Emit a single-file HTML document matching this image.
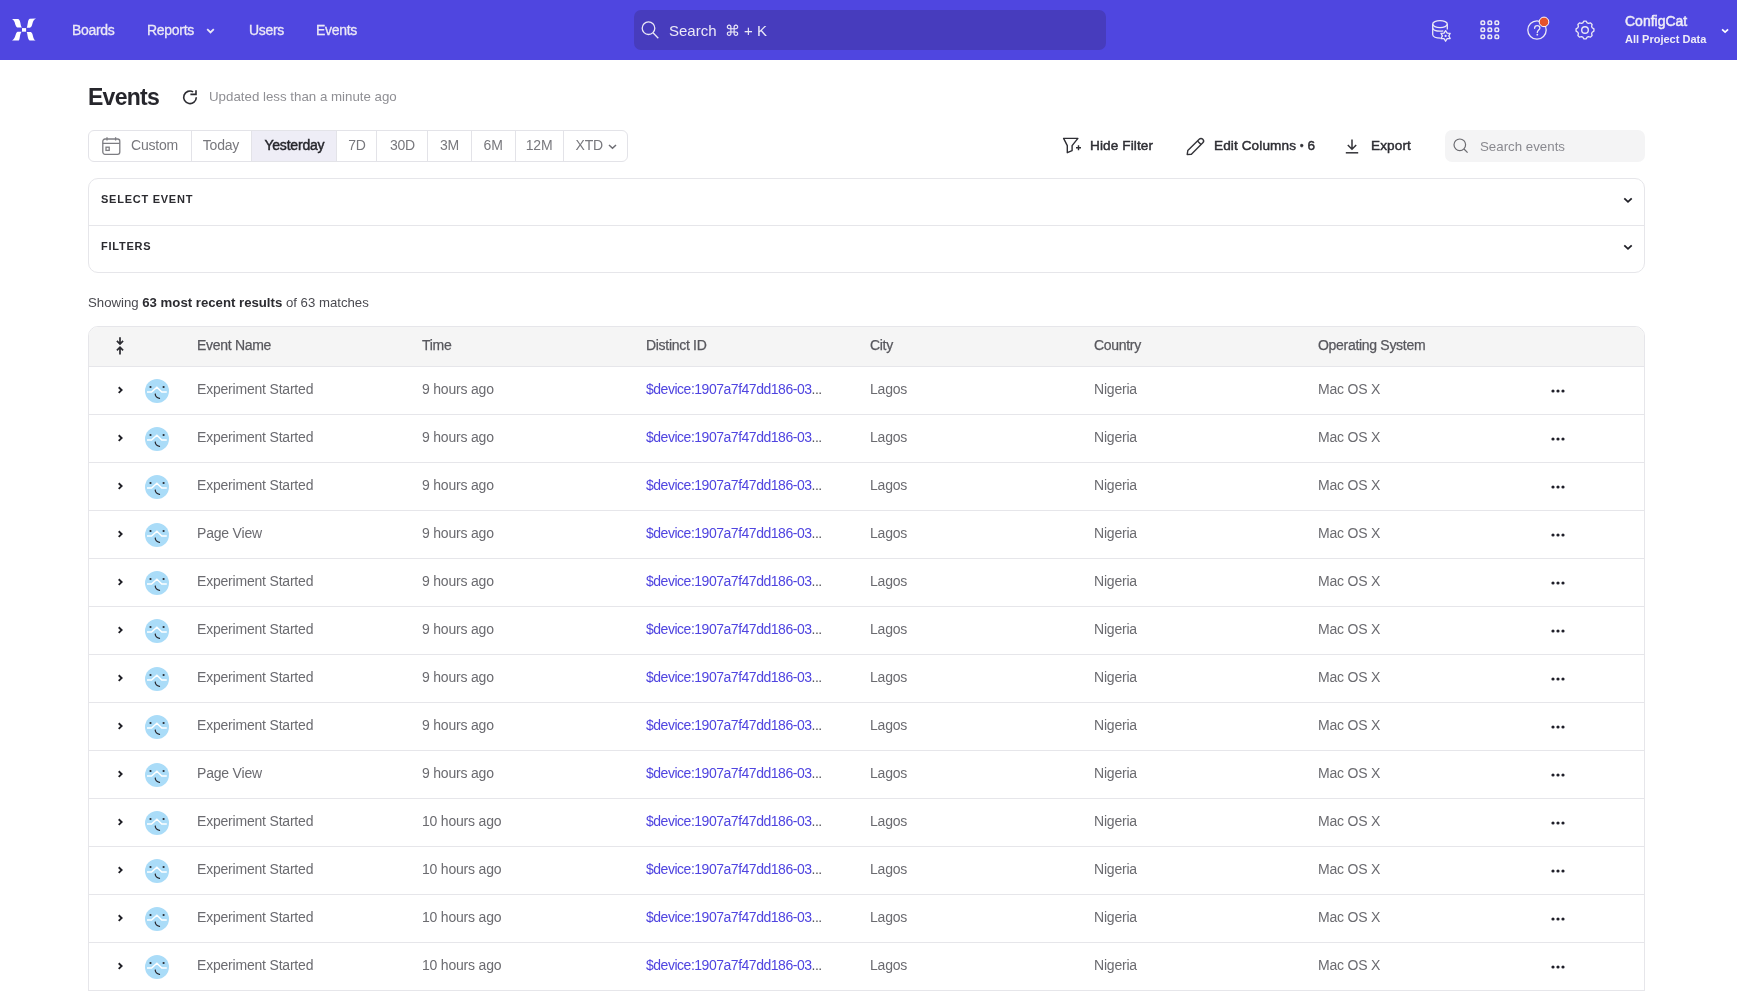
<!DOCTYPE html><html><head><meta charset="utf-8"><style>
*{box-sizing:border-box;margin:0;padding:0}
html,body{width:1737px;height:991px;overflow:hidden;background:#fff;font-family:"Liberation Sans",sans-serif;position:relative}
#root{position:absolute;left:0;top:0;width:1737px;height:991px;will-change:transform;background:#fff}
.abs{position:absolute;white-space:nowrap}
svg{position:absolute;overflow:visible}
#hdr{position:absolute;left:0;top:0;width:1737px;height:60px;background:#4f46e0}
.nav{position:absolute;top:0px;height:60px;line-height:60px;color:#ebe8f6;font-size:14px;letter-spacing:-0.3px;-webkit-text-stroke:0.3px #ebe8f6;white-space:nowrap}
#search{position:absolute;left:634px;top:10px;width:472px;height:40px;background:#473cbd;border-radius:7px}
#search .t{position:absolute;left:35px;top:1px;line-height:40px;font-size:15px;color:#ece9f7;white-space:nowrap}
#title{left:88px;top:83.5px;font-size:23px;font-weight:700;color:#26262c;letter-spacing:-0.75px}
#upd{left:209px;top:88.5px;font-size:13.3px;color:#8f8f94}
#seg{position:absolute;left:88px;top:130px;width:540px;height:32px;border:1px solid #e3e3e8;border-radius:6px;overflow:hidden}
.sg{position:absolute;top:0;height:30px;line-height:28px;font-size:14px;letter-spacing:-0.2px;color:#78787d;border-right:1px solid #e3e3e8;white-space:nowrap}
.tb{position:absolute;top:130px;height:32px;line-height:32px;font-size:13.6px;letter-spacing:0.1px;font-weight:400;color:#2e2e34;-webkit-text-stroke:0.45px #2e2e34;white-space:nowrap}
#sev{position:absolute;left:1445px;top:130px;width:200px;height:32px;background:#f4f4f5;border-radius:7px}
#sev .t{position:absolute;left:35px;top:1px;line-height:32px;font-size:13.3px;color:#8a8a90;white-space:nowrap}
#acc{position:absolute;left:88px;top:178px;width:1557px;height:95px;border:1px solid #e6e6ea;border-radius:10px}
.acch{position:absolute;left:12px;font-size:11px;font-weight:700;letter-spacing:0.75px;color:#2b2b30}
#showing{left:88px;top:294.5px;font-size:13.2px;color:#4a4a50}
#showing b{color:#2b2b30}
#tbl{position:absolute;left:88px;top:326px;width:1557px;height:700px;border:1px solid #e6e6ea;border-radius:10px;overflow:hidden}
#th{position:absolute;left:0;top:0;width:100%;height:40px;background:#f5f5f5;border-bottom:1px solid #e6e6ea}
.hc{position:absolute;top:-1px;line-height:39px;font-size:14px;letter-spacing:-0.3px;color:#58585e;-webkit-text-stroke:0.25px #58585e;white-space:nowrap}
.row{position:absolute;left:0;width:100%;height:48px;border-bottom:1px solid #e6e6ea}
.c{position:absolute;top:-1px;line-height:47px;font-size:14px;letter-spacing:-0.2px;color:#6b6b70;white-space:nowrap}
.c.l{color:#55555b}
</style></head><body><div id="root">
<div id="hdr">
<svg style="left:10px;top:16px" width="28" height="28" viewBox="0 0 28 28"><g fill="#fff"><path d="M2 3.1 L8.2 3.1 C9.3 3.6 9.9 4.6 10.3 6.5 C10.8 9 11.1 10.9 11.9 11.6 L7.3 11.6 C6.3 10.9 5.7 9.9 5.2 8.3 C4.6 6 4.1 4.4 2 3.1 Z"/><path d="M26 2.4 L19.8 2.8 C18.7 3.4 18.3 4.5 17.9 6.5 C17.4 9 17.2 10.9 16.7 11.7 L19.8 11.7 C21.2 11.4 21.9 10 22.4 7.8 C22.9 5.4 23.6 3.6 26 2.4 Z"/><path d="M7.6 15.8 L11.6 15.8 C10.6 17 10.2 19 9.8 21.2 C9.5 23 9.2 24 8.8 24.6 L2 24.6 C4 23.5 4.8 21.5 5.4 19.6 C6 17.6 6.6 16.3 7.6 15.8 Z"/><path d="M16.7 16.1 L20.9 16.1 C22 16.8 22.6 18.2 23 20.2 C23.5 22.6 24.2 24 25.7 24.6 L19.8 24.6 C18.6 24 18.1 22.6 17.7 20.6 C17.3 18.5 17.2 16.9 16.7 16.1 Z"/><rect x="12" y="12.1" width="4.1" height="3.6"/></g></svg>
<div class="nav" style="left:72px">Boards</div>
<div class="nav" style="left:147px">Reports</div>
<div class="nav" style="left:249px">Users</div>
<div class="nav" style="left:316px">Events</div>
<svg style="left:206px;top:28px" width="9" height="6" viewBox="0 0 9 6"><path d="M1.2 1.2 L4.5 4.4 L7.8 1.2" fill="none" stroke="#ebe8f6" stroke-width="1.8"/></svg>
<div id="search">
<svg style="left:7px;top:11px" width="19" height="19" viewBox="0 0 19 19"><circle cx="7.5" cy="7.2" r="6.3" fill="none" stroke="#ebe8f6" stroke-width="1.3"/><path d="M12 11.8 L17.3 17.2" stroke="#ebe8f6" stroke-width="1.3"/></svg>
<div class="t">Search&nbsp; ⌘ + K</div></div>
<svg style="left:1432px;top:20px" width="20" height="22" viewBox="0 0 20 22"><g fill="none" stroke="#ebe8f6" stroke-width="1.3"><ellipse cx="8" cy="4.1" rx="7.3" ry="3.5"/><path d="M0.7 4.1 V14.5 C0.7 16.6 4 18.2 8.5 18.2"/><path d="M15.3 4.1 V9.5"/><path d="M0.7 7.8 C0.7 10 4 11.2 8 11.2 C9.5 11.2 10.5 11.1 11.3 10.9"/></g><g transform="translate(13.6,15.9)"><path d="M0 -5.3 L1.6 -2.8 L4.6 -2.6 L3.2 0 L4.6 2.6 L1.6 2.8 L0 5.3 L-1.6 2.8 L-4.6 2.6 L-3.2 0 L-4.6 -2.6 L-1.6 -2.8 Z" fill="#4f46e0" stroke="#ebe8f6" stroke-width="1.3" stroke-linejoin="round"/><circle r="1.1" fill="#ebe8f6"/></g></svg>
<svg style="left:1479.5px;top:20px" width="20" height="20" viewBox="0 0 20 20"><rect x="1" y="1" width="3.6" height="3.6" rx="1.2" fill="none" stroke="#ebe8f6" stroke-width="1.5"/><rect x="1" y="8" width="3.6" height="3.6" rx="1.2" fill="none" stroke="#ebe8f6" stroke-width="1.5"/><rect x="1" y="15" width="3.6" height="3.6" rx="1.2" fill="none" stroke="#ebe8f6" stroke-width="1.5"/><rect x="8" y="1" width="3.6" height="3.6" rx="1.2" fill="none" stroke="#ebe8f6" stroke-width="1.5"/><rect x="8" y="8" width="3.6" height="3.6" rx="1.2" fill="none" stroke="#ebe8f6" stroke-width="1.5"/><rect x="8" y="15" width="3.6" height="3.6" rx="1.2" fill="none" stroke="#ebe8f6" stroke-width="1.5"/><rect x="15" y="1" width="3.6" height="3.6" rx="1.2" fill="none" stroke="#ebe8f6" stroke-width="1.5"/><rect x="15" y="8" width="3.6" height="3.6" rx="1.2" fill="none" stroke="#ebe8f6" stroke-width="1.5"/><rect x="15" y="15" width="3.6" height="3.6" rx="1.2" fill="none" stroke="#ebe8f6" stroke-width="1.5"/></svg>
<svg style="left:1527px;top:16px" width="24" height="25" viewBox="0 0 24 25"><circle cx="10" cy="14" r="9.2" fill="none" stroke="#ebe8f6" stroke-width="1.3"/><path d="M7.6 12.3 C7.6 10.5 8.8 9.6 10.3 9.6 C11.8 9.6 12.9 10.6 12.9 11.9 C12.9 13.9 10.3 14.2 10.3 16.4" fill="none" stroke="#ebe8f6" stroke-width="1.3" stroke-linecap="round"/><circle cx="10.3" cy="18.7" r="0.9" fill="#ebe8f6"/><circle cx="17" cy="5.9" r="4.8" fill="#e5522d" stroke="#fff" stroke-width="1"/></svg>
<svg style="left:1575px;top:20px" width="20" height="20" viewBox="0 0 20 20"><polygon points="7.81,2.83 8.90,1.07 11.10,1.07 12.19,2.83 13.52,3.38 15.54,2.91 17.09,4.46 16.62,6.48 17.17,7.81 18.93,8.90 18.93,11.10 17.17,12.19 16.62,13.52 17.09,15.54 15.54,17.09 13.52,16.62 12.19,17.17 11.10,18.93 8.90,18.93 7.81,17.17 6.48,16.62 4.46,17.09 2.91,15.54 3.38,13.52 2.83,12.19 1.07,11.10 1.07,8.90 2.83,7.81 3.38,6.48 2.91,4.46 4.46,2.91 6.48,3.38" fill="none" stroke="#ebe8f6" stroke-width="1.3" stroke-linejoin="round"/><circle cx="10" cy="10" r="3.3" fill="none" stroke="#ebe8f6" stroke-width="1.4"/></svg>
<div class="abs" style="left:1625px;top:12.5px;font-size:14px;color:#eeecf8;-webkit-text-stroke:0.5px #eeecf8">ConfigCat</div>
<div class="abs" style="left:1625px;top:33px;font-size:11px;font-weight:700;color:#eeecf8">All Project Data</div>
<svg style="left:1721px;top:28px" width="9" height="6" viewBox="0 0 9 6"><path d="M1.1 1.3 L4.1 4.1 L7.1 1.3" fill="none" stroke="#fff" stroke-width="1.7"/></svg>
</div>
<div id="title" class="abs">Events</div>
<svg style="left:182px;top:89px" width="16" height="16" viewBox="0 0 16 16"><path d="M14.3 8.3 A6.3 6.3 0 1 1 11.15 2.84" fill="none" stroke="#2c2c32" stroke-width="1.6"/><path d="M8.4 5.4 H14 V1.2" fill="none" stroke="#2c2c32" stroke-width="1.6"/></svg>
<div id="upd" class="abs">Updated less than a minute ago</div>
<div id="seg">
<div class="sg" style="left:0;width:102.6px;"><span style="position:absolute;left:42px">Custom</span></div>
<div class="sg" style="left:101.6px;width:61.8px;text-align:center;">Today</div>
<div class="sg" style="left:163.4px;width:85.0px;text-align:center;background:#eeedf6;color:#26262c;-webkit-text-stroke:0.45px #26262c;letter-spacing:-0.2px;line-height:29px;">Yesterday</div>
<div class="sg" style="left:248.4px;width:40.1px;text-align:center;">7D</div>
<div class="sg" style="left:288.5px;width:50.9px;text-align:center;">30D</div>
<div class="sg" style="left:339.4px;width:43.2px;text-align:center;">3M</div>
<div class="sg" style="left:382.6px;width:44.0px;text-align:center;">6M</div>
<div class="sg" style="left:426.6px;width:48.0px;text-align:center;">12M</div>
<div class="sg" style="left:474.6px;width:63.9px;border-right:none;"><span style="position:absolute;left:12px">XTD</span></div>
</div>
<svg style="left:102px;top:137px" width="19" height="18" viewBox="0 0 19 18"><g fill="none" stroke="#7d7d82" stroke-width="1.3"><rect x="0.8" y="2" width="17" height="15.3" rx="2.2"/><path d="M0.8 6.3 H17.8 M5 0.3 V3.5 M13.6 0.3 V3.5"/><rect x="4" y="10.2" width="3.2" height="3.2"/></g></svg>
<svg style="left:608px;top:144px" width="9" height="6" viewBox="0 0 9 6"><path d="M1 1 L4.5 4.3 L8 1" fill="none" stroke="#6e6e74" stroke-width="1.5"/></svg>
<svg style="left:1063px;top:137px" width="20" height="18" viewBox="0 0 20 18"><g fill="none" stroke="#2e2e34" stroke-width="1.4" stroke-linejoin="round"><path d="M0.6 1.4 H14.9 L9.1 8.6 V13.6 L4.3 15.7 V8.6 Z"/><path d="M15.5 8.3 V13.3 M13 10.8 H18"/></g></svg>
<div class="tb" style="left:1090px">Hide Filter</div>
<svg style="left:1186px;top:137px" width="19" height="19" viewBox="0 0 19 19"><g fill="none" stroke="#333338" stroke-width="1.4" stroke-linejoin="round"><path d="M1.2 17.5 L1.8 13.6 L13.2 2.2 C14.2 1.2 15.8 1.2 16.8 2.2 C17.8 3.2 17.8 4.8 16.8 5.8 L5.4 17.2 Z"/><path d="M11.5 4 L15 7.5"/></g></svg>
<div class="tb" style="left:1214px">Edit Columns <span style="font-size:10px;position:relative;top:-1px">•</span> 6</div>
<svg style="left:1345px;top:139px" width="14" height="15" viewBox="0 0 14 15"><g fill="none" stroke="#333338" stroke-width="1.5"><path d="M7 0.5 V10 M2.8 6 L7 10.2 L11.2 6"/><path d="M0.8 13.8 H13.2"/></g></svg>
<div class="tb" style="left:1371px">Export</div>
<div id="sev">
<svg style="left:8px;top:8px" width="16" height="16" viewBox="0 0 16 16"><circle cx="6.8" cy="6.8" r="5.8" fill="none" stroke="#6b6b70" stroke-width="1.2"/><path d="M11 11 L14.6 14.6" stroke="#6b6b70" stroke-width="1.2"/></svg>
<div class="t">Search events</div></div>
<div id="acc"><div style="position:absolute;left:0;top:46px;width:100%;height:1px;background:#e6e6ea"></div>
<div class="acch abs" style="top:14px">SELECT EVENT</div><div class="acch abs" style="top:61px">FILTERS</div>
<svg style="left:1534px;top:18px" width="10" height="7" viewBox="0 0 10 7"><path d="M1.3 1.3 L5 4.8 L8.7 1.3" fill="none" stroke="#1f1f26" stroke-width="1.8"/></svg>
<svg style="left:1534px;top:65px" width="10" height="7" viewBox="0 0 10 7"><path d="M1.3 1.3 L5 4.8 L8.7 1.3" fill="none" stroke="#1f1f26" stroke-width="1.8"/></svg>
</div>
<div id="showing" class="abs">Showing <b>63 most recent results</b> of 63 matches</div>
<div id="tbl"><div id="th">
<svg style="left:27px;top:9px" width="10" height="20" viewBox="0 0 10 20"><g fill="none" stroke="#2a2a30" stroke-width="1.7"><path d="M4 1.3 V8.2 M0.9 4.9 L4 8 L7.1 4.9"/><path d="M4 18.6 V11.2 M0.9 14.3 L4 11.2 L7.1 14.3"/></g></svg>
<div class="hc" style="left:108px">Event Name</div>
<div class="hc" style="left:333px">Time</div>
<div class="hc" style="left:557px">Distinct ID</div>
<div class="hc" style="left:781px">City</div>
<div class="hc" style="left:1005px">Country</div>
<div class="hc" style="left:1229px">Operating System</div>
</div>
<div class="row" style="top:40px">
<svg style="left:28px;top:19px" width="7" height="9" viewBox="0 0 7 9"><path d="M1.7 1.3 L4.6 4.1 L1.7 6.9" fill="none" stroke="#1f1f26" stroke-width="1.9"/></svg>
<svg style="left:56px;top:12px" width="24" height="24" viewBox="0 0 24 24"><circle cx="12" cy="12" r="12" fill="#aadcf8"/><path d="M2 13 H6.6 L11.9 8.3 L16.8 13 H21.8" fill="none" stroke="#fff" stroke-width="1.5"/><circle cx="5.5" cy="8" r="1.1" fill="#2a2a30"/><circle cx="18.6" cy="8" r="1.1" fill="#2a2a30"/><path d="M10.2 15 C10.4 17.3 11.9 18.9 14.5 19.4" fill="none" stroke="#2a2a30" stroke-width="1.25" stroke-linecap="round"/></svg>
<div class="c" style="left:108px">Experiment Started</div>
<div class="c" style="left:333px">9 hours ago</div>
<div class="c l" style="left:557px"><span style="color:#4f44e0;letter-spacing:-0.48px">$device:1907a7f47dd186-03</span><span style="letter-spacing:-0.5px">...</span></div>
<div class="c" style="left:781px">Lagos</div>
<div class="c" style="left:1005px">Nigeria</div>
<div class="c" style="left:1229px">Mac OS X</div>
<svg style="left:1461.5px;top:22px" width="16" height="4" viewBox="0 0 16 4"><circle cx="2" cy="2" r="1.6" fill="#1f1f29"/><circle cx="7" cy="2" r="1.6" fill="#1f1f29"/><circle cx="12" cy="2" r="1.6" fill="#1f1f29"/></svg>
</div>
<div class="row" style="top:88px">
<svg style="left:28px;top:19px" width="7" height="9" viewBox="0 0 7 9"><path d="M1.7 1.3 L4.6 4.1 L1.7 6.9" fill="none" stroke="#1f1f26" stroke-width="1.9"/></svg>
<svg style="left:56px;top:12px" width="24" height="24" viewBox="0 0 24 24"><circle cx="12" cy="12" r="12" fill="#aadcf8"/><path d="M2 13 H6.6 L11.9 8.3 L16.8 13 H21.8" fill="none" stroke="#fff" stroke-width="1.5"/><circle cx="5.5" cy="8" r="1.1" fill="#2a2a30"/><circle cx="18.6" cy="8" r="1.1" fill="#2a2a30"/><path d="M10.2 15 C10.4 17.3 11.9 18.9 14.5 19.4" fill="none" stroke="#2a2a30" stroke-width="1.25" stroke-linecap="round"/></svg>
<div class="c" style="left:108px">Experiment Started</div>
<div class="c" style="left:333px">9 hours ago</div>
<div class="c l" style="left:557px"><span style="color:#4f44e0;letter-spacing:-0.48px">$device:1907a7f47dd186-03</span><span style="letter-spacing:-0.5px">...</span></div>
<div class="c" style="left:781px">Lagos</div>
<div class="c" style="left:1005px">Nigeria</div>
<div class="c" style="left:1229px">Mac OS X</div>
<svg style="left:1461.5px;top:22px" width="16" height="4" viewBox="0 0 16 4"><circle cx="2" cy="2" r="1.6" fill="#1f1f29"/><circle cx="7" cy="2" r="1.6" fill="#1f1f29"/><circle cx="12" cy="2" r="1.6" fill="#1f1f29"/></svg>
</div>
<div class="row" style="top:136px">
<svg style="left:28px;top:19px" width="7" height="9" viewBox="0 0 7 9"><path d="M1.7 1.3 L4.6 4.1 L1.7 6.9" fill="none" stroke="#1f1f26" stroke-width="1.9"/></svg>
<svg style="left:56px;top:12px" width="24" height="24" viewBox="0 0 24 24"><circle cx="12" cy="12" r="12" fill="#aadcf8"/><path d="M2 13 H6.6 L11.9 8.3 L16.8 13 H21.8" fill="none" stroke="#fff" stroke-width="1.5"/><circle cx="5.5" cy="8" r="1.1" fill="#2a2a30"/><circle cx="18.6" cy="8" r="1.1" fill="#2a2a30"/><path d="M10.2 15 C10.4 17.3 11.9 18.9 14.5 19.4" fill="none" stroke="#2a2a30" stroke-width="1.25" stroke-linecap="round"/></svg>
<div class="c" style="left:108px">Experiment Started</div>
<div class="c" style="left:333px">9 hours ago</div>
<div class="c l" style="left:557px"><span style="color:#4f44e0;letter-spacing:-0.48px">$device:1907a7f47dd186-03</span><span style="letter-spacing:-0.5px">...</span></div>
<div class="c" style="left:781px">Lagos</div>
<div class="c" style="left:1005px">Nigeria</div>
<div class="c" style="left:1229px">Mac OS X</div>
<svg style="left:1461.5px;top:22px" width="16" height="4" viewBox="0 0 16 4"><circle cx="2" cy="2" r="1.6" fill="#1f1f29"/><circle cx="7" cy="2" r="1.6" fill="#1f1f29"/><circle cx="12" cy="2" r="1.6" fill="#1f1f29"/></svg>
</div>
<div class="row" style="top:184px">
<svg style="left:28px;top:19px" width="7" height="9" viewBox="0 0 7 9"><path d="M1.7 1.3 L4.6 4.1 L1.7 6.9" fill="none" stroke="#1f1f26" stroke-width="1.9"/></svg>
<svg style="left:56px;top:12px" width="24" height="24" viewBox="0 0 24 24"><circle cx="12" cy="12" r="12" fill="#aadcf8"/><path d="M2 13 H6.6 L11.9 8.3 L16.8 13 H21.8" fill="none" stroke="#fff" stroke-width="1.5"/><circle cx="5.5" cy="8" r="1.1" fill="#2a2a30"/><circle cx="18.6" cy="8" r="1.1" fill="#2a2a30"/><path d="M10.2 15 C10.4 17.3 11.9 18.9 14.5 19.4" fill="none" stroke="#2a2a30" stroke-width="1.25" stroke-linecap="round"/></svg>
<div class="c" style="left:108px">Page View</div>
<div class="c" style="left:333px">9 hours ago</div>
<div class="c l" style="left:557px"><span style="color:#4f44e0;letter-spacing:-0.48px">$device:1907a7f47dd186-03</span><span style="letter-spacing:-0.5px">...</span></div>
<div class="c" style="left:781px">Lagos</div>
<div class="c" style="left:1005px">Nigeria</div>
<div class="c" style="left:1229px">Mac OS X</div>
<svg style="left:1461.5px;top:22px" width="16" height="4" viewBox="0 0 16 4"><circle cx="2" cy="2" r="1.6" fill="#1f1f29"/><circle cx="7" cy="2" r="1.6" fill="#1f1f29"/><circle cx="12" cy="2" r="1.6" fill="#1f1f29"/></svg>
</div>
<div class="row" style="top:232px">
<svg style="left:28px;top:19px" width="7" height="9" viewBox="0 0 7 9"><path d="M1.7 1.3 L4.6 4.1 L1.7 6.9" fill="none" stroke="#1f1f26" stroke-width="1.9"/></svg>
<svg style="left:56px;top:12px" width="24" height="24" viewBox="0 0 24 24"><circle cx="12" cy="12" r="12" fill="#aadcf8"/><path d="M2 13 H6.6 L11.9 8.3 L16.8 13 H21.8" fill="none" stroke="#fff" stroke-width="1.5"/><circle cx="5.5" cy="8" r="1.1" fill="#2a2a30"/><circle cx="18.6" cy="8" r="1.1" fill="#2a2a30"/><path d="M10.2 15 C10.4 17.3 11.9 18.9 14.5 19.4" fill="none" stroke="#2a2a30" stroke-width="1.25" stroke-linecap="round"/></svg>
<div class="c" style="left:108px">Experiment Started</div>
<div class="c" style="left:333px">9 hours ago</div>
<div class="c l" style="left:557px"><span style="color:#4f44e0;letter-spacing:-0.48px">$device:1907a7f47dd186-03</span><span style="letter-spacing:-0.5px">...</span></div>
<div class="c" style="left:781px">Lagos</div>
<div class="c" style="left:1005px">Nigeria</div>
<div class="c" style="left:1229px">Mac OS X</div>
<svg style="left:1461.5px;top:22px" width="16" height="4" viewBox="0 0 16 4"><circle cx="2" cy="2" r="1.6" fill="#1f1f29"/><circle cx="7" cy="2" r="1.6" fill="#1f1f29"/><circle cx="12" cy="2" r="1.6" fill="#1f1f29"/></svg>
</div>
<div class="row" style="top:280px">
<svg style="left:28px;top:19px" width="7" height="9" viewBox="0 0 7 9"><path d="M1.7 1.3 L4.6 4.1 L1.7 6.9" fill="none" stroke="#1f1f26" stroke-width="1.9"/></svg>
<svg style="left:56px;top:12px" width="24" height="24" viewBox="0 0 24 24"><circle cx="12" cy="12" r="12" fill="#aadcf8"/><path d="M2 13 H6.6 L11.9 8.3 L16.8 13 H21.8" fill="none" stroke="#fff" stroke-width="1.5"/><circle cx="5.5" cy="8" r="1.1" fill="#2a2a30"/><circle cx="18.6" cy="8" r="1.1" fill="#2a2a30"/><path d="M10.2 15 C10.4 17.3 11.9 18.9 14.5 19.4" fill="none" stroke="#2a2a30" stroke-width="1.25" stroke-linecap="round"/></svg>
<div class="c" style="left:108px">Experiment Started</div>
<div class="c" style="left:333px">9 hours ago</div>
<div class="c l" style="left:557px"><span style="color:#4f44e0;letter-spacing:-0.48px">$device:1907a7f47dd186-03</span><span style="letter-spacing:-0.5px">...</span></div>
<div class="c" style="left:781px">Lagos</div>
<div class="c" style="left:1005px">Nigeria</div>
<div class="c" style="left:1229px">Mac OS X</div>
<svg style="left:1461.5px;top:22px" width="16" height="4" viewBox="0 0 16 4"><circle cx="2" cy="2" r="1.6" fill="#1f1f29"/><circle cx="7" cy="2" r="1.6" fill="#1f1f29"/><circle cx="12" cy="2" r="1.6" fill="#1f1f29"/></svg>
</div>
<div class="row" style="top:328px">
<svg style="left:28px;top:19px" width="7" height="9" viewBox="0 0 7 9"><path d="M1.7 1.3 L4.6 4.1 L1.7 6.9" fill="none" stroke="#1f1f26" stroke-width="1.9"/></svg>
<svg style="left:56px;top:12px" width="24" height="24" viewBox="0 0 24 24"><circle cx="12" cy="12" r="12" fill="#aadcf8"/><path d="M2 13 H6.6 L11.9 8.3 L16.8 13 H21.8" fill="none" stroke="#fff" stroke-width="1.5"/><circle cx="5.5" cy="8" r="1.1" fill="#2a2a30"/><circle cx="18.6" cy="8" r="1.1" fill="#2a2a30"/><path d="M10.2 15 C10.4 17.3 11.9 18.9 14.5 19.4" fill="none" stroke="#2a2a30" stroke-width="1.25" stroke-linecap="round"/></svg>
<div class="c" style="left:108px">Experiment Started</div>
<div class="c" style="left:333px">9 hours ago</div>
<div class="c l" style="left:557px"><span style="color:#4f44e0;letter-spacing:-0.48px">$device:1907a7f47dd186-03</span><span style="letter-spacing:-0.5px">...</span></div>
<div class="c" style="left:781px">Lagos</div>
<div class="c" style="left:1005px">Nigeria</div>
<div class="c" style="left:1229px">Mac OS X</div>
<svg style="left:1461.5px;top:22px" width="16" height="4" viewBox="0 0 16 4"><circle cx="2" cy="2" r="1.6" fill="#1f1f29"/><circle cx="7" cy="2" r="1.6" fill="#1f1f29"/><circle cx="12" cy="2" r="1.6" fill="#1f1f29"/></svg>
</div>
<div class="row" style="top:376px">
<svg style="left:28px;top:19px" width="7" height="9" viewBox="0 0 7 9"><path d="M1.7 1.3 L4.6 4.1 L1.7 6.9" fill="none" stroke="#1f1f26" stroke-width="1.9"/></svg>
<svg style="left:56px;top:12px" width="24" height="24" viewBox="0 0 24 24"><circle cx="12" cy="12" r="12" fill="#aadcf8"/><path d="M2 13 H6.6 L11.9 8.3 L16.8 13 H21.8" fill="none" stroke="#fff" stroke-width="1.5"/><circle cx="5.5" cy="8" r="1.1" fill="#2a2a30"/><circle cx="18.6" cy="8" r="1.1" fill="#2a2a30"/><path d="M10.2 15 C10.4 17.3 11.9 18.9 14.5 19.4" fill="none" stroke="#2a2a30" stroke-width="1.25" stroke-linecap="round"/></svg>
<div class="c" style="left:108px">Experiment Started</div>
<div class="c" style="left:333px">9 hours ago</div>
<div class="c l" style="left:557px"><span style="color:#4f44e0;letter-spacing:-0.48px">$device:1907a7f47dd186-03</span><span style="letter-spacing:-0.5px">...</span></div>
<div class="c" style="left:781px">Lagos</div>
<div class="c" style="left:1005px">Nigeria</div>
<div class="c" style="left:1229px">Mac OS X</div>
<svg style="left:1461.5px;top:22px" width="16" height="4" viewBox="0 0 16 4"><circle cx="2" cy="2" r="1.6" fill="#1f1f29"/><circle cx="7" cy="2" r="1.6" fill="#1f1f29"/><circle cx="12" cy="2" r="1.6" fill="#1f1f29"/></svg>
</div>
<div class="row" style="top:424px">
<svg style="left:28px;top:19px" width="7" height="9" viewBox="0 0 7 9"><path d="M1.7 1.3 L4.6 4.1 L1.7 6.9" fill="none" stroke="#1f1f26" stroke-width="1.9"/></svg>
<svg style="left:56px;top:12px" width="24" height="24" viewBox="0 0 24 24"><circle cx="12" cy="12" r="12" fill="#aadcf8"/><path d="M2 13 H6.6 L11.9 8.3 L16.8 13 H21.8" fill="none" stroke="#fff" stroke-width="1.5"/><circle cx="5.5" cy="8" r="1.1" fill="#2a2a30"/><circle cx="18.6" cy="8" r="1.1" fill="#2a2a30"/><path d="M10.2 15 C10.4 17.3 11.9 18.9 14.5 19.4" fill="none" stroke="#2a2a30" stroke-width="1.25" stroke-linecap="round"/></svg>
<div class="c" style="left:108px">Page View</div>
<div class="c" style="left:333px">9 hours ago</div>
<div class="c l" style="left:557px"><span style="color:#4f44e0;letter-spacing:-0.48px">$device:1907a7f47dd186-03</span><span style="letter-spacing:-0.5px">...</span></div>
<div class="c" style="left:781px">Lagos</div>
<div class="c" style="left:1005px">Nigeria</div>
<div class="c" style="left:1229px">Mac OS X</div>
<svg style="left:1461.5px;top:22px" width="16" height="4" viewBox="0 0 16 4"><circle cx="2" cy="2" r="1.6" fill="#1f1f29"/><circle cx="7" cy="2" r="1.6" fill="#1f1f29"/><circle cx="12" cy="2" r="1.6" fill="#1f1f29"/></svg>
</div>
<div class="row" style="top:472px">
<svg style="left:28px;top:19px" width="7" height="9" viewBox="0 0 7 9"><path d="M1.7 1.3 L4.6 4.1 L1.7 6.9" fill="none" stroke="#1f1f26" stroke-width="1.9"/></svg>
<svg style="left:56px;top:12px" width="24" height="24" viewBox="0 0 24 24"><circle cx="12" cy="12" r="12" fill="#aadcf8"/><path d="M2 13 H6.6 L11.9 8.3 L16.8 13 H21.8" fill="none" stroke="#fff" stroke-width="1.5"/><circle cx="5.5" cy="8" r="1.1" fill="#2a2a30"/><circle cx="18.6" cy="8" r="1.1" fill="#2a2a30"/><path d="M10.2 15 C10.4 17.3 11.9 18.9 14.5 19.4" fill="none" stroke="#2a2a30" stroke-width="1.25" stroke-linecap="round"/></svg>
<div class="c" style="left:108px">Experiment Started</div>
<div class="c" style="left:333px">10 hours ago</div>
<div class="c l" style="left:557px"><span style="color:#4f44e0;letter-spacing:-0.48px">$device:1907a7f47dd186-03</span><span style="letter-spacing:-0.5px">...</span></div>
<div class="c" style="left:781px">Lagos</div>
<div class="c" style="left:1005px">Nigeria</div>
<div class="c" style="left:1229px">Mac OS X</div>
<svg style="left:1461.5px;top:22px" width="16" height="4" viewBox="0 0 16 4"><circle cx="2" cy="2" r="1.6" fill="#1f1f29"/><circle cx="7" cy="2" r="1.6" fill="#1f1f29"/><circle cx="12" cy="2" r="1.6" fill="#1f1f29"/></svg>
</div>
<div class="row" style="top:520px">
<svg style="left:28px;top:19px" width="7" height="9" viewBox="0 0 7 9"><path d="M1.7 1.3 L4.6 4.1 L1.7 6.9" fill="none" stroke="#1f1f26" stroke-width="1.9"/></svg>
<svg style="left:56px;top:12px" width="24" height="24" viewBox="0 0 24 24"><circle cx="12" cy="12" r="12" fill="#aadcf8"/><path d="M2 13 H6.6 L11.9 8.3 L16.8 13 H21.8" fill="none" stroke="#fff" stroke-width="1.5"/><circle cx="5.5" cy="8" r="1.1" fill="#2a2a30"/><circle cx="18.6" cy="8" r="1.1" fill="#2a2a30"/><path d="M10.2 15 C10.4 17.3 11.9 18.9 14.5 19.4" fill="none" stroke="#2a2a30" stroke-width="1.25" stroke-linecap="round"/></svg>
<div class="c" style="left:108px">Experiment Started</div>
<div class="c" style="left:333px">10 hours ago</div>
<div class="c l" style="left:557px"><span style="color:#4f44e0;letter-spacing:-0.48px">$device:1907a7f47dd186-03</span><span style="letter-spacing:-0.5px">...</span></div>
<div class="c" style="left:781px">Lagos</div>
<div class="c" style="left:1005px">Nigeria</div>
<div class="c" style="left:1229px">Mac OS X</div>
<svg style="left:1461.5px;top:22px" width="16" height="4" viewBox="0 0 16 4"><circle cx="2" cy="2" r="1.6" fill="#1f1f29"/><circle cx="7" cy="2" r="1.6" fill="#1f1f29"/><circle cx="12" cy="2" r="1.6" fill="#1f1f29"/></svg>
</div>
<div class="row" style="top:568px">
<svg style="left:28px;top:19px" width="7" height="9" viewBox="0 0 7 9"><path d="M1.7 1.3 L4.6 4.1 L1.7 6.9" fill="none" stroke="#1f1f26" stroke-width="1.9"/></svg>
<svg style="left:56px;top:12px" width="24" height="24" viewBox="0 0 24 24"><circle cx="12" cy="12" r="12" fill="#aadcf8"/><path d="M2 13 H6.6 L11.9 8.3 L16.8 13 H21.8" fill="none" stroke="#fff" stroke-width="1.5"/><circle cx="5.5" cy="8" r="1.1" fill="#2a2a30"/><circle cx="18.6" cy="8" r="1.1" fill="#2a2a30"/><path d="M10.2 15 C10.4 17.3 11.9 18.9 14.5 19.4" fill="none" stroke="#2a2a30" stroke-width="1.25" stroke-linecap="round"/></svg>
<div class="c" style="left:108px">Experiment Started</div>
<div class="c" style="left:333px">10 hours ago</div>
<div class="c l" style="left:557px"><span style="color:#4f44e0;letter-spacing:-0.48px">$device:1907a7f47dd186-03</span><span style="letter-spacing:-0.5px">...</span></div>
<div class="c" style="left:781px">Lagos</div>
<div class="c" style="left:1005px">Nigeria</div>
<div class="c" style="left:1229px">Mac OS X</div>
<svg style="left:1461.5px;top:22px" width="16" height="4" viewBox="0 0 16 4"><circle cx="2" cy="2" r="1.6" fill="#1f1f29"/><circle cx="7" cy="2" r="1.6" fill="#1f1f29"/><circle cx="12" cy="2" r="1.6" fill="#1f1f29"/></svg>
</div>
<div class="row" style="top:616px">
<svg style="left:28px;top:19px" width="7" height="9" viewBox="0 0 7 9"><path d="M1.7 1.3 L4.6 4.1 L1.7 6.9" fill="none" stroke="#1f1f26" stroke-width="1.9"/></svg>
<svg style="left:56px;top:12px" width="24" height="24" viewBox="0 0 24 24"><circle cx="12" cy="12" r="12" fill="#aadcf8"/><path d="M2 13 H6.6 L11.9 8.3 L16.8 13 H21.8" fill="none" stroke="#fff" stroke-width="1.5"/><circle cx="5.5" cy="8" r="1.1" fill="#2a2a30"/><circle cx="18.6" cy="8" r="1.1" fill="#2a2a30"/><path d="M10.2 15 C10.4 17.3 11.9 18.9 14.5 19.4" fill="none" stroke="#2a2a30" stroke-width="1.25" stroke-linecap="round"/></svg>
<div class="c" style="left:108px">Experiment Started</div>
<div class="c" style="left:333px">10 hours ago</div>
<div class="c l" style="left:557px"><span style="color:#4f44e0;letter-spacing:-0.48px">$device:1907a7f47dd186-03</span><span style="letter-spacing:-0.5px">...</span></div>
<div class="c" style="left:781px">Lagos</div>
<div class="c" style="left:1005px">Nigeria</div>
<div class="c" style="left:1229px">Mac OS X</div>
<svg style="left:1461.5px;top:22px" width="16" height="4" viewBox="0 0 16 4"><circle cx="2" cy="2" r="1.6" fill="#1f1f29"/><circle cx="7" cy="2" r="1.6" fill="#1f1f29"/><circle cx="12" cy="2" r="1.6" fill="#1f1f29"/></svg>
</div>
</div>
</div></body></html>
